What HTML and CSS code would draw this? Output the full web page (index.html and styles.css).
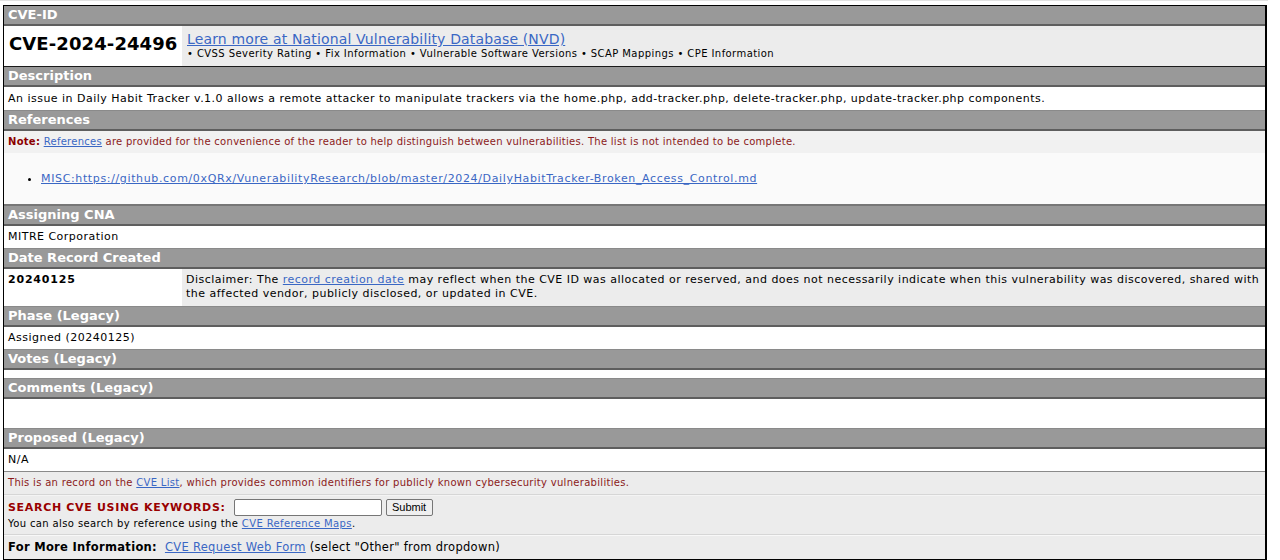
FILE: index.html
```html
<!DOCTYPE html>
<html lang="en">
<head>
<meta charset="utf-8">
<title>CVE-2024-24496</title>
<link rel="stylesheet" href="styles.css">
</head>
<body>
<div class="page">
  <div class="record">
    <div class="hd">CVE-ID</div>
    <div class="row split id-row">
      <div class="cell cveid">CVE-2024-24496</div>
      <div class="cell alt nvd">
        <a class="nvd-link" href="#">Learn more at National Vulnerability Database (NVD)</a>
        <div class="nvd-small">&bull; CVSS Severity Rating &bull; Fix Information &bull; Vulnerable Software Versions &bull; SCAP Mappings &bull; CPE Information</div>
      </div>
    </div>

    <div class="hd">Description</div>
    <div class="row cell desc">An issue in Daily Habit Tracker v.1.0 allows a remote attacker to manipulate trackers via the home.php, add-tracker.php, delete-tracker.php, update-tracker.php components.</div>

    <div class="hd">References</div>
    <div class="row cell note"><b class="note-label">Note:</b> <a href="#">References</a> are provided for the convenience of the reader to help distinguish between vulnerabilities. The list is not intended to be complete.</div>
    <div class="row refs">
      <ul class="ref-list">
        <li><a href="#">MISC:https://github.com/0xQRx/VunerabilityResearch/blob/master/2024/DailyHabitTracker-Broken_Access_Control.md</a></li>
      </ul>
    </div>

    <div class="hd">Assigning CNA</div>
    <div class="row cell">MITRE Corporation</div>

    <div class="hd">Date Record Created</div>
    <div class="row split date-row">
      <div class="cell date">20240125</div>
      <div class="cell alt disclaimer"><p class="disc-text">Disclaimer: The <a href="#">record creation date</a> may reflect when the CVE ID was allocated or reserved, and does not necessarily indicate when this vulnerability was discovered, shared with the affected vendor, publicly disclosed, or updated in CVE.</p></div>
    </div>

    <div class="hd">Phase (Legacy)</div>
    <div class="row cell">Assigned (20240125)</div>

    <div class="hd">Votes (Legacy)</div>
    <div class="row empty-sm"></div>

    <div class="hd">Comments (Legacy)</div>
    <div class="row empty-lg"></div>

    <div class="hd">Proposed (Legacy)</div>
    <div class="row cell">N/A</div>

    <div class="row cell alt red">This is an record on the <a href="#">CVE List</a>, which provides common identifiers for publicly known cybersecurity vulnerabilities.</div>

    <div class="row cell alt search">
      <form class="search-form">
        <label class="search-label" for="kw">SEARCH CVE USING KEYWORDS:</label>
        <input class="search-input" id="kw" type="text">
        <button class="search-btn" type="button">Submit</button>
      </form>
      <div class="search-note">You can also search by reference using the <a href="#">CVE Reference Maps</a>.</div>
    </div>

    <div class="row cell alt more"><b>For More Information:</b>&nbsp; <a href="#">CVE Request Web Form</a> (select "Other" from dropdown)</div>
  </div>
</div>
</body>
</html>
```

FILE: styles.css
```css
html, body {
  margin: 0;
  padding: 0;
  background: #ffffff;
}

body {
  font-family: "DejaVu Sans", Verdana, sans-serif;
  font-size: 11px;
  letter-spacing: 0.48px;
  color: #000;
}

.page {
  padding: 2px 0 0 3px;
  width: 1265px;
  border-top: 1px solid #e2e2e2;
}

.record {
  margin-top: 2px;
  border: 1px solid #000;
  border-right-width: 2px;
  width: 1261px;
}

a {
  color: #3a67c4;
  text-decoration: underline;
}

.hd {
  background: #999999;
  color: #ffffff;
  font-weight: bold;
  font-size: 13px;
  letter-spacing: 0;
  line-height: 18px;
  height: 18px;
  padding: 0 4px;
  border-bottom: 2px solid #5e5e5e;
}

.row {
  border-bottom: 1px solid #8a8a8a;
}

.cell {
  padding: 4px 4px 5px;
  line-height: 13px;
}

.split {
  display: grid;
  grid-template-columns: 178px 1fr;
}

.alt {
  background: #ececec;
}

.id-row {
  border-bottom: 1px solid #1a1a1a;
}

.cveid {
  font-weight: bold;
  font-size: 18px;
  letter-spacing: 0.1px;
  line-height: 22px;
  padding: 7px 4px 5px 5px;
  white-space: nowrap;
}

.nvd {
  padding: 5px 4px 6px 5px;
  line-height: 14px;
}

.nvd-link {
  font-size: 14px;
  letter-spacing: 0.15px;
  line-height: 17px;
}

.nvd-small {
  font-size: 10px;
  letter-spacing: 0.42px;
  line-height: 12px;
}

.desc {
  padding-top: 5px;
  padding-bottom: 5px;
}

.note {
  background: #f1f1f1;
  color: #8b1a1a;
  font-size: 10px;
  letter-spacing: 0.28px;
  border-bottom: none;
}

.note-label {
  color: #8b0000;
}

.refs {
  background: #fafafa;
  height: 51px;
  display: flex;
  align-items: center;
  border-bottom: 2px solid #777;
}

.ref-list {
  margin: 0;
  padding-left: 37px;
}

.ref-list a {
  letter-spacing: 0.64px;
}

.date-row .cell {
  line-height: 14px;
}

.date {
  font-weight: bold;
  letter-spacing: 0.8px;
  padding-left: 4px;
}

.disclaimer {
  padding-left: 4px;
}

.disc-text {
  margin: 0;
}

.empty-sm {
  height: 8px;
}

.empty-lg {
  height: 29px;
}

.red {
  color: #8b1a1a;
  font-size: 10px;
  letter-spacing: 0.3px;
  border-bottom: 1px solid #d6d6d6;
}

.search {
  padding-top: 3px;
  padding-bottom: 3px;
  border-top: 1px solid #f4f4f4;
  border-bottom: 1px solid #d6d6d6;
}

.search-form {
  display: flex;
  align-items: center;
  margin: 0;
}

.search-label {
  font-weight: bold;
  color: #990000;
  letter-spacing: 0.68px;
  margin-right: 8px;
}

.search-input {
  width: 142px;
  height: 13px;
  padding: 1px 2px;
  margin: 0 4px 0 0;
  border: 1px solid #767676;
  border-radius: 2px;
  font-size: 11px;
}

.search-btn {
  font-family: "Liberation Sans", Arial, sans-serif;
  font-size: 11px;
  letter-spacing: 0;
  height: 17px;
  width: 47px;
  padding: 0;
  border: 1px solid #767676;
  border-radius: 2px;
  background: #efefef;
  color: #000;
  line-height: 13px;
}

.search-note {
  font-size: 10px;
  letter-spacing: 0.38px;
  line-height: 14px;
  margin-top: 1px;
}

.more {
  border-top: 1px solid #f8f8f8;
  border-bottom: none;
  padding-top: 5px;
  padding-bottom: 5px;
  font-size: 11.5px;
  letter-spacing: 0.3px;
}
```
